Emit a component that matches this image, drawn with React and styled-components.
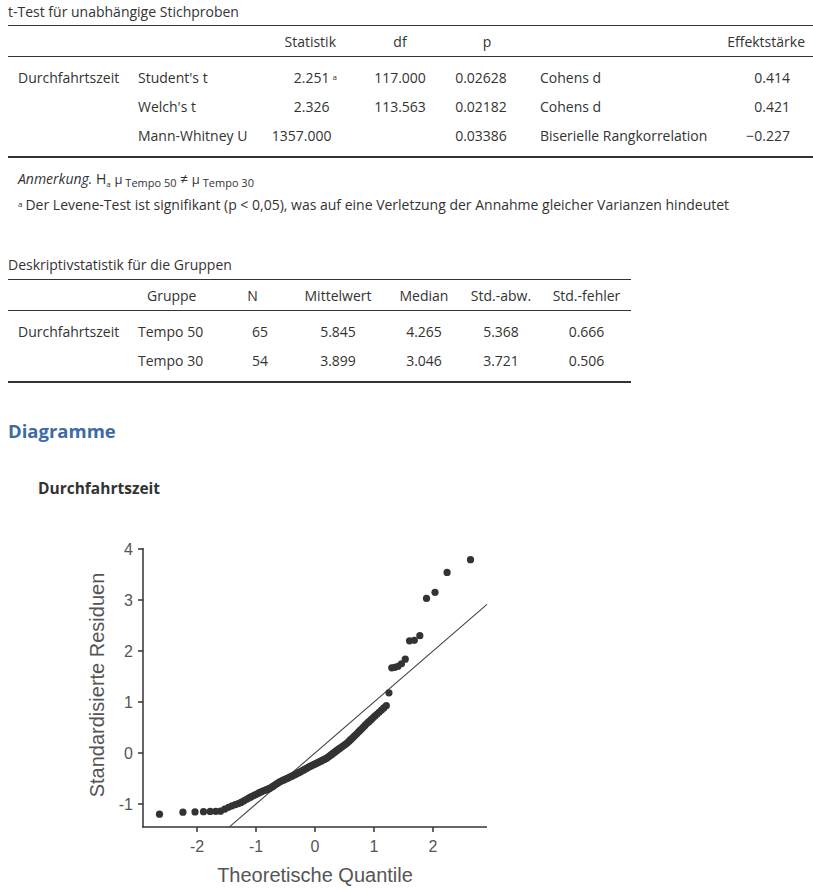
import React from 'react';
import styled, { createGlobalStyle } from 'styled-components';

const GlobalStyle = createGlobalStyle`
  body {
    margin: 0;
    background: #fff;
    font-family: "Open Sans", "Noto Sans", sans-serif;
    color: #333;
  }
`;

const Page = styled.div`
  padding: 3px 0 0 8px;
  width: 805px;
`;

const Caption = styled.div`
  font-size: 14px;
  line-height: 18px;
  margin-top: ${p => p.$top || 0}px;
  margin-bottom: ${p => p.$gap}px;
`;

const Table = styled.table`
  border-collapse: collapse;
  table-layout: fixed;
  width: ${p => p.$width}px;
  font-size: 14px;
  color: #333;
  border-top: 1px solid #333;
  border-bottom: 2px solid #333;
`;

const HeadCell = styled.th`
  font-weight: normal;
  height: 30px;
  padding: 0 ${p => p.$pr || 0}px 0 ${p => p.$pl || 0}px;
  text-align: ${p => p.$align || 'center'};
  border-bottom: 1px solid #333;
  white-space: nowrap;
`;

const BodyRow = styled.tr`
  &:first-child td { padding-top: 6px; }
  &:last-child td { padding-bottom: 6px; }
`;

const Cell = styled.td`
  line-height: 29px;
  padding: 0 ${p => p.$pr || 0}px 0 ${p => p.$pl || 0}px;
  text-align: ${p => p.$align || 'center'};
  white-space: nowrap;
  vertical-align: top;
`;

const Mark = styled.sup`
  font-size: 8px;
  vertical-align: 3px;
  line-height: 0;
  margin-left: 3px;
  visibility: ${p => (p.$hidden ? 'hidden' : 'visible')};
`;

const Note = styled.div`
  font-size: 14px;
  line-height: 22px;
  padding-left: 10px;
  margin-top: ${p => p.$top}px;
`;

const Sub = styled.sub`
  font-size: ${p => p.$size || 11}px;
  vertical-align: -3px;
  line-height: 0;
`;

const Greek = styled.span`
  font-size: 13px;
`;

const Heading = styled.h2`
  margin: 36px 0 0;
  font-size: 18.5px;
  line-height: 24px;
  font-weight: 700;
  color: #3e6aa6;
`;

const PlotTitle = styled.h3`
  margin: 35px 0 0 30px;
  font-size: 15.5px;
  line-height: 20px;
  font-weight: 700;
  color: #333;
`;

const Plot = styled.svg`
  display: block;
  margin: 32px 0 0 52px;
  font-family: "Liberation Sans", Arial, sans-serif;
`;

// normal quantile (Abramowitz & Stegun 26.2.23)
const qnorm = (p) => {
  const q = p < 0.5 ? p : 1 - p;
  const t = Math.sqrt(-2 * Math.log(q));
  const x = t - (2.515517 + 0.802853 * t + 0.010328 * t * t) /
    (1 + 1.432788 * t + 0.189269 * t * t + 0.001308 * t * t * t);
  return p < 0.5 ? -x : x;
};

const anchors = [
  [-2.7, -1.2], [-2.64, -1.2], [-2.24, -1.16], [-2.03, -1.155], [-1.6, -1.14],
  [-1.44, -1.05], [-1.27, -0.98], [-1.1, -0.87], [-0.93, -0.77], [-0.76, -0.69],
  [-0.59, -0.56], [-0.42, -0.47], [-0.25, -0.37], [-0.08, -0.26], [0.03, -0.2],
  [0.2, -0.1], [0.37, 0.05], [0.54, 0.19], [0.71, 0.38], [0.88, 0.58],
  [1.05, 0.76], [1.21, 0.93], [1.3, 1.0],
];

const topValues = [1.18, 1.67, 1.68, 1.7, 1.75, 1.84, 2.2, 2.21, 2.3, 3.03, 3.15, 3.54, 3.79];

const interp = (x) => {
  for (let i = 1; i < anchors.length; i++) {
    const [x0, y0] = anchors[i - 1];
    const [x1, y1] = anchors[i];
    if (x <= x1) return y0 + ((x - x0) / (x1 - x0)) * (y1 - y0);
  }
  return anchors[anchors.length - 1][1];
};

const N = 119;
const points = Array.from({ length: N }, (_x, i) => {
  const x = qnorm((i + 0.5) / N);
  const fromTop = N - 1 - i;
  const y = fromTop < topValues.length ? topValues[topValues.length - 1 - fromTop] : interp(x);
  return [x, y];
});

const px = (x) => 255 + 59 * x;
const py = (y) => 223 - 51 * y;

const QQPlot = () => (
  <Plot width="450" height="360" viewBox="0 0 450 360">
    <line x1={px(-1.45)} y1={py(-1.45)} x2={px(2.915)} y2={py(2.915)} stroke="#444" strokeWidth="1.1" />
    {points.map(([x, y], i) => (
      <circle key={i} cx={px(x)} cy={py(y)} r="3.6" fill="#333" />
    ))}
    <line x1="83" y1="18" x2="83" y2="297.5" stroke="#333" strokeWidth="1.5" />
    <line x1="82.25" y1="297" x2="427" y2="297" stroke="#333" strokeWidth="1.5" />
    {[-1, 0, 1, 2, 3, 4].map((v) => (
      <g key={v}>
        <line x1="78" y1={py(v)} x2="83" y2={py(v)} stroke="#333" strokeWidth="1.5" />
        <text x="73" y={py(v)} textAnchor="end" dominantBaseline="central" fontSize="16" fill="#555">{v}</text>
      </g>
    ))}
    {[-2, -1, 0, 1, 2].map((v) => (
      <g key={v}>
        <line x1={px(v)} y1="297" x2={px(v)} y2="302" stroke="#333" strokeWidth="1.5" />
        <text x={px(v)} y="316" textAnchor="middle" dominantBaseline="central" fontSize="16" fill="#555">{v}</text>
      </g>
    ))}
    <text x="255" y="345" textAnchor="middle" dominantBaseline="central" fontSize="20" fill="#555">Theoretische Quantile</text>
    <text x="37" y="155" transform="rotate(-90 37 155)" textAnchor="middle" dominantBaseline="central" fontSize="20" fill="#555">Standardisierte Residuen</text>
  </Plot>
);

const App = () => (
  <Page>
    <GlobalStyle />
    <Caption $gap={4}>t-Test für unabhängige Stichproben</Caption>
    <Table $width={805}>
      <colgroup>
        <col style={{ width: 120 }} />
        <col style={{ width: 134 }} />
        <col style={{ width: 88 }} />
        <col style={{ width: 100 }} />
        <col style={{ width: 62 }} />
        <col style={{ width: 188 }} />
        <col style={{ width: 113 }} />
      </colgroup>
      <thead>
        <tr>
          <HeadCell />
          <HeadCell />
          <HeadCell $align="right" $pr={14}>Statistik</HeadCell>
          <HeadCell>df</HeadCell>
          <HeadCell $pl={12}>p</HeadCell>
          <HeadCell />
          <HeadCell $align="right" $pr={8}>Effektstärke</HeadCell>
        </tr>
      </thead>
      <tbody>
        <BodyRow>
          <Cell $align="left" $pl={10}>Durchfahrtszeit</Cell>
          <Cell $align="left" $pl={10}>Student's t</Cell>
          <Cell $align="right" $pr={13}>2.251<Mark>a</Mark></Cell>
          <Cell>117.000</Cell>
          <Cell>0.02628</Cell>
          <Cell $align="left" $pl={28}>Cohens d</Cell>
          <Cell $align="right" $pr={23}>0.414</Cell>
        </BodyRow>
        <BodyRow>
          <Cell />
          <Cell $align="left" $pl={10}>Welch's t</Cell>
          <Cell $align="right" $pr={13}>2.326<Mark $hidden>a</Mark></Cell>
          <Cell>113.563</Cell>
          <Cell>0.02182</Cell>
          <Cell $align="left" $pl={28}>Cohens d</Cell>
          <Cell $align="right" $pr={23}>0.421</Cell>
        </BodyRow>
        <BodyRow>
          <Cell />
          <Cell $align="left" $pl={10}>Mann-Whitney U</Cell>
          <Cell $align="right" $pr={11}>1357.000<Mark $hidden>a</Mark></Cell>
          <Cell />
          <Cell>0.03386</Cell>
          <Cell $align="left" $pl={28}>Biserielle Rangkorrelation</Cell>
          <Cell $align="right" $pr={23}>−0.227</Cell>
        </BodyRow>
      </tbody>
    </Table>
    <Note $top={10}>
      <i>Anmerkung.</i> H<Sub $size={8}>a</Sub> <Greek>μ</Greek><Sub> Tempo 50</Sub> ≠ <Greek>μ</Greek><Sub> Tempo 30</Sub>
    </Note>
    <Note $top={4}>
      <Mark style={{ marginLeft: 0, marginRight: 3 }}>a</Mark>Der Levene-Test ist signifikant (p &lt; 0,05), was auf eine Verletzung der Annahme gleicher Varianzen hindeutet
    </Note>

    <Caption $top={40} $gap={5}>Deskriptivstatistik für die Gruppen</Caption>
    <Table $width={623}>
      <colgroup>
        <col style={{ width: 120 }} />
        <col style={{ width: 97 }} />
        <col style={{ width: 55 }} />
        <col style={{ width: 116 }} />
        <col style={{ width: 56 }} />
        <col style={{ width: 98 }} />
        <col style={{ width: 73 }} />
        <col style={{ width: 8 }} />
      </colgroup>
      <thead>
        <tr>
          <HeadCell />
          <HeadCell $align="left" $pl={19}>Gruppe</HeadCell>
          <HeadCell>N</HeadCell>
          <HeadCell>Mittelwert</HeadCell>
          <HeadCell>Median</HeadCell>
          <HeadCell>Std.-abw.</HeadCell>
          <HeadCell>Std.-fehler</HeadCell>
          <HeadCell />
        </tr>
      </thead>
      <tbody>
        <BodyRow>
          <Cell $align="left" $pl={10}>Durchfahrtszeit</Cell>
          <Cell $align="left" $pl={10}>Tempo 50</Cell>
          <Cell $align="right" $pr={12}>65</Cell>
          <Cell>5.845</Cell>
          <Cell>4.265</Cell>
          <Cell>5.368</Cell>
          <Cell>0.666</Cell>
          <Cell />
        </BodyRow>
        <BodyRow>
          <Cell />
          <Cell $align="left" $pl={10}>Tempo 30</Cell>
          <Cell $align="right" $pr={12}>54</Cell>
          <Cell>3.899</Cell>
          <Cell>3.046</Cell>
          <Cell>3.721</Cell>
          <Cell>0.506</Cell>
          <Cell />
        </BodyRow>
      </tbody>
    </Table>

    <Heading>Diagramme</Heading>
    <PlotTitle>Durchfahrtszeit</PlotTitle>
    <QQPlot />
  </Page>
);

export default App;
